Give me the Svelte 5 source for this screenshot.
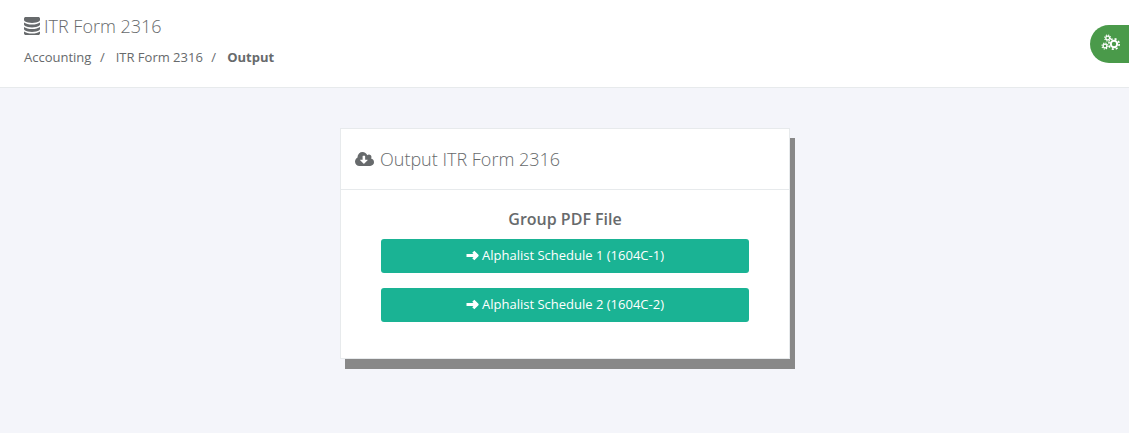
<script>
  const schedules = ['Alphalist Schedule 1 (1604C-1)', 'Alphalist Schedule 2 (1604C-2)'];
  const crumbs = ['Accounting', 'ITR Form 2316'];
</script>

<div class="page">
  <header class="header">
    <h1 class="title">
      <svg class="db" viewBox="128 128 1536 1536" preserveAspectRatio="none" aria-hidden="true"><path d="M896 768q237 0 443-43t325-127v170q0 69-103 128t-280 93.500-385 34.500-385-34.500-280-93.500-103-128v-170q119 84 325 127t443 43zm0 768q237 0 443-43t325-127v170q0 69-103 128t-280 93.500-385 34.500-385-34.500-280-93.500-103-128v-170q119 84 325 127t443 43zm0-384q237 0 443-43t325-127v170q0 69-103 128t-280 93.500-385 34.500-385-34.500-280-93.500-103-128v-170q119 84 325 127t443 43zm0-1152q208 0 385 34.500t280 93.500 103 128v128q0 69-103 128t-280 93.500-385 34.500-385-34.500-280-93.500-103-128v-128q0-69 103-128t280-93.500 385-34.500z"/></svg>
      ITR Form 2316
    </h1>
    <nav class="crumbs">
      {#each crumbs as c}
        <span>{c}</span><span class="sep">/</span>
      {/each}
      <strong>Output</strong>
    </nav>
    <div class="tab">
      <svg viewBox="0 0 20 20" width="20" height="20" aria-hidden="true">
        <g fill="none" stroke="#fff">
          <circle cx="13" cy="11" r="3.200" stroke-width="2"/>
          <circle cx="13" cy="11" r="5.200" stroke-width="1.600" stroke-dasharray="2.080 2"/>
          <circle cx="6.700" cy="5" r="1.900" stroke-width="1.300"/>
          <circle cx="6.700" cy="5" r="3" stroke-width="1.100" stroke-dasharray="1.270 1.090"/>
          <circle cx="4" cy="13" r="1.900" stroke-width="1.300"/>
          <circle cx="4" cy="13" r="3" stroke-width="1.100" stroke-dasharray="1.270 1.090"/>
        </g>
      </svg>
    </div>
  </header>

  <main class="main">
    <section class="card">
      <div class="card-head">
        <svg class="cloud" viewBox="0 128 1920 1408" aria-hidden="true"><path d="M1280 928q0-14-9-23t-23-9h-224v-352q0-13-9.500-22.500t-22.500-9.500h-192q-13 0-22.500 9.500t-9.500 22.500v352h-224q-14 0-23 9t-9 23q0 12 10 24l352 352q9 9 23 9t23-9l351-351q11-13 11-25zm640 224q0 159-112.500 271.500t-271.500 112.500h-1088q-185 0-316.500-131.500t-131.500-316.500q0-130 70-240t188-165q-2-30-2-43 0-212 150-362t362-150q156 0 285.500 87t188.500 231q71-62 166-62 106 0 181 75t75 181q0 76-41 138 130 31 213.500 135.500t83.500 238.500z"/></svg>
        <span>Output ITR Form 2316</span>
      </div>
      <div class="card-body">
        <h2 class="group">Group PDF File</h2>
        {#each schedules as s}
          <button class="btn" type="button">
            <svg class="arrow" viewBox="0 0 13 11" aria-hidden="true"><path d="M0.500 5.500H10.800M7.300 1.700 11.100 5.500 7.300 9.300" fill="none" stroke="#fff" stroke-width="3" stroke-linejoin="round"/></svg>
            {s}
          </button>
        {/each}
      </div>
    </section>
  </main>
</div>

<style>
  :global(body) {
    margin: 0;
    background: #f4f5fa;
  }
  .page {
    font-family: "Open Sans", sans-serif;
    color: #676a6c;
    height: 433px;
    overflow: hidden;
    background: #f4f5fa;
  }
  .header {
    position: relative;
    box-sizing: border-box;
    height: 88px;
    padding: 13px 24px 0;
    background: #fff;
    border-bottom: 1px solid #e7eaec;
  }
  .title {
    margin: 0;
    display: flex;
    align-items: center;
    gap: 4px;
    height: 26px;
    font-size: 18px;
    font-weight: 300;
    line-height: 26px;
    color: #676a6c;
  }
  .db {
    width: 16px;
    height: 18px;
    fill: #676a6c;
  }
  .crumbs {
    display: flex;
    margin-top: 8px;
    font-size: 13px;
    line-height: 20px;
  }
  .sep {
    margin: 0 11px 0 8.5px;
  }
  .crumbs strong {
    font-weight: 700;
  }
  .tab {
    position: absolute;
    top: 25px;
    right: 0;
    width: 39px;
    height: 38px;
    box-sizing: border-box;
    padding: 8px 0 0 11px;
    background: #4a9a4a;
    border-radius: 19px 0 0 19px;
  }
  .tab svg {
    display: block;
  }
  .main {
    padding-top: 40px;
  }
  .card {
    box-sizing: border-box;
    width: 450px;
    height: 231px;
    margin-left: 340px;
    background: #fff;
    border: 1px solid #e7eaec;
    box-shadow: 5px 10px 0 #888888;
  }
  .card-head {
    display: flex;
    align-items: center;
    gap: 6px;
    height: 60px;
    padding-left: 14px;
    border-bottom: 1px solid #e7eaec;
    font-size: 18px;
    font-weight: 300;
    color: #676a6c;
  }
  .cloud {
    width: 19px;
    height: 14px;
    fill: #676a6c;
  }
  .card-body {
    padding: 18px 40px 0;
  }
  .group {
    margin: 0 0 9px;
    text-align: center;
    font-size: 16px;
    font-weight: 600;
    line-height: 22px;
    color: #676a6c;
  }
  .btn {
    display: flex;
    align-items: center;
    justify-content: center;
    gap: 3px;
    box-sizing: border-box;
    width: 100%;
    height: 34px;
    margin-bottom: 15px;
    padding: 0 0 2px;
    border: 0;
    border-radius: 3px;
    background: #1ab394;
    color: #fff;
    font-family: inherit;
    font-size: 13px;
    font-weight: 400;
  }
  .arrow {
    width: 13px;
    height: 11px;
  }
</style>
